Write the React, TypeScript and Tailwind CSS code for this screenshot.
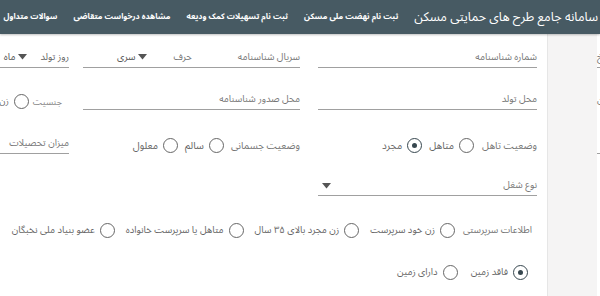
const Caret = () => (
  <svg width="9" height="6" viewBox="0 0 9 6" className="shrink-0">
    <polygon points="0,0 9,0 4.5,5.5" fill="#555" />
  </svg>
);

function Radio({ label, checked }: { label: string; checked?: boolean }) {
  return (
    <span className="flex items-center gap-[5px] whitespace-nowrap">
      <span
        className={`w-[15px] h-[15px] shrink-0 rounded-full border-[1.5px] flex items-center justify-center ${
          checked ? 'border-[#37474f]' : 'border-[#666]'
        }`}
      >
        {checked && <span className="w-[5px] h-[5px] rounded-full bg-[#37474f]" />}
      </span>
      <span>{label}</span>
    </span>
  );
}

function Field({ label, className = '' }: { label: string; className?: string }) {
  return (
    <div className={`h-[22px] border-b border-[#a0a0a0] flex items-end pb-[3px] whitespace-nowrap ${className}`}>
      <span className="text-[#777]">{label}</span>
    </div>
  );
}

export default function App() {
  return (
    <div className="w-[600px] h-[296px] overflow-hidden bg-white font-['Noto_Sans_Arabic','DejaVu_Sans',sans-serif] text-[9.5px] text-[#666]">
      {/* هدر */}
      <header
        dir="rtl"
        className="h-[34px] bg-[#475a63] flex items-center gap-[16px] pr-[2px] text-white whitespace-nowrap shadow-[0_1px_2px_rgba(0,0,0,0.25)] relative z-10"
      >
        <span className="text-[12.5px] leading-none">سامانه جامع طرح های حمایتی مسکن</span>
        <span className="text-[8px] font-bold">ثبت نام نهضت ملی مسکن</span>
        <span className="text-[8px] font-bold">ثبت نام تسهیلات کمک ودیعه</span>
        <span className="text-[8px] font-bold">مشاهده درخواست متقاضی</span>
        <span className="text-[8px] font-bold">سوالات متداول</span>
      </header>

      <div className="flex h-[262px]">
        {/* فرم */}
        <div dir="rtl" className="w-[547px] shrink-0 overflow-hidden pr-[10px] flex flex-col">
          {/* ردیف ۱ */}
          <div className="flex gap-[18px] mt-[12px] shrink-0">
            <Field label="شماره شناسنامه" className="w-[219px] shrink-0" />
            <div className="w-[217px] shrink-0 h-[22px] border-b border-[#a0a0a0] flex items-end pb-[3px] whitespace-nowrap">
              <span className="text-[#777]">سریال شناسنامه</span>
              <span className="text-[#777] mr-[46px]">حرف</span>
              <span className="flex items-center gap-[3px] mr-[26px] text-[#555]">
                <Caret />
                سری
              </span>
            </div>
            <div className="w-[200px] shrink-0 h-[22px] border-b border-[#a0a0a0] flex items-end pb-[3px] whitespace-nowrap mr-[-4px]">
              <span className="text-[#666]">روز تولد</span>
              <span className="flex items-center gap-[3px] mr-[13px] text-[#555]">
                <Caret />
                ماه
              </span>
            </div>
          </div>

          {/* ردیف ۲ */}
          <div className="flex gap-[18px] mt-[20px] shrink-0">
            <Field label="محل تولد" className="w-[219px] shrink-0" />
            <Field label="محل صدور شناسنامه" className="w-[217px] shrink-0" />
            <div className="w-[200px] shrink-0 h-[22px] flex items-end pb-[1px] pr-[7px] mr-[-4px] gap-[4px] whitespace-nowrap text-[9px]">
              <span className="text-[#888]">جنسیت</span>
              <div className="flex gap-[10px]">
                <Radio label="زن" />
                <Radio label="مرد" />
              </div>
            </div>
          </div>

          {/* ردیف ۳ */}
          <div className="flex gap-[18px] mt-[22px] shrink-0 text-[10px]">
            <div className="w-[219px] shrink-0 h-[22px] flex items-end pb-[1px] gap-[8px] whitespace-nowrap">
              <span className="text-[#777]">وضعیت تاهل</span>
              <div className="flex gap-[7px]">
                <Radio label="متاهل" />
                <Radio label="مجرد" checked />
              </div>
            </div>
            <div className="w-[217px] shrink-0 h-[22px] flex items-end pb-[1px] gap-[7px] whitespace-nowrap">
              <span className="text-[#777]">وضعیت جسمانی</span>
              <div className="flex gap-[7px]">
                <Radio label="سالم" />
                <Radio label="معلول" />
              </div>
            </div>
            <Field label="میزان تحصیلات" className="w-[200px] shrink-0 mr-[-4px] text-[9.5px]" />
          </div>

          {/* ردیف ۴ */}
          <div className="flex mt-[20px] shrink-0">
            <div className="w-[219px] h-[22px] border-b border-[#a0a0a0] flex items-end justify-between pb-[3px] pl-[4px]">
              <span className="text-[#777]">نوع شغل</span>
              <span className="mb-[3px]">
                <Caret />
              </span>
            </div>
          </div>

          {/* ردیف ۵ */}
          <div className="flex items-center gap-[8px] mt-[23px] pr-[5px] h-[22px] whitespace-nowrap shrink-0 text-[9.5px]">
            <span className="text-[#777]">اطلاعات سرپرستی</span>
            <div className="flex gap-[11px]">
              <Radio label="زن خود سرپرست" />
              <Radio label="زن مجرد بالای ۳۵ سال" />
              <Radio label="متاهل یا سرپرست خانواده" />
              <Radio label="عضو بنیاد ملی نخبگان" />
            </div>
          </div>

          {/* ردیف ۶ */}
          <div className="flex items-center gap-[13px] mt-[20px] pr-[9px] h-[22px] whitespace-nowrap shrink-0 text-[9.5px]">
            <Radio label="فاقد زمین" checked />
            <Radio label="دارای زمین" />
          </div>
        </div>

        {/* نوار خاکستری */}
        <div className="w-[50px] shrink-0 bg-[#f5f4f4] border-l border-[#e6e6e6]" />

        {/* پنل سمت راست */}
        <div className="w-[200px] shrink-0 bg-white flex flex-col">
          <div className="mt-[12px] h-[22px] border-b border-[#a0a0a0] flex items-end pb-[3px] text-[#777]">
            <span dir="rtl">نام پدر تاریخ</span>
          </div>
          <div className="mt-[20px] h-[22px] flex items-end pb-[3px] text-[#777]">
            <span dir="rtl">جنسیت زن</span>
          </div>
          <div className="mt-[22px] h-[22px] border-b border-[#a0a0a0]" />
        </div>
      </div>
    </div>
  );
}
